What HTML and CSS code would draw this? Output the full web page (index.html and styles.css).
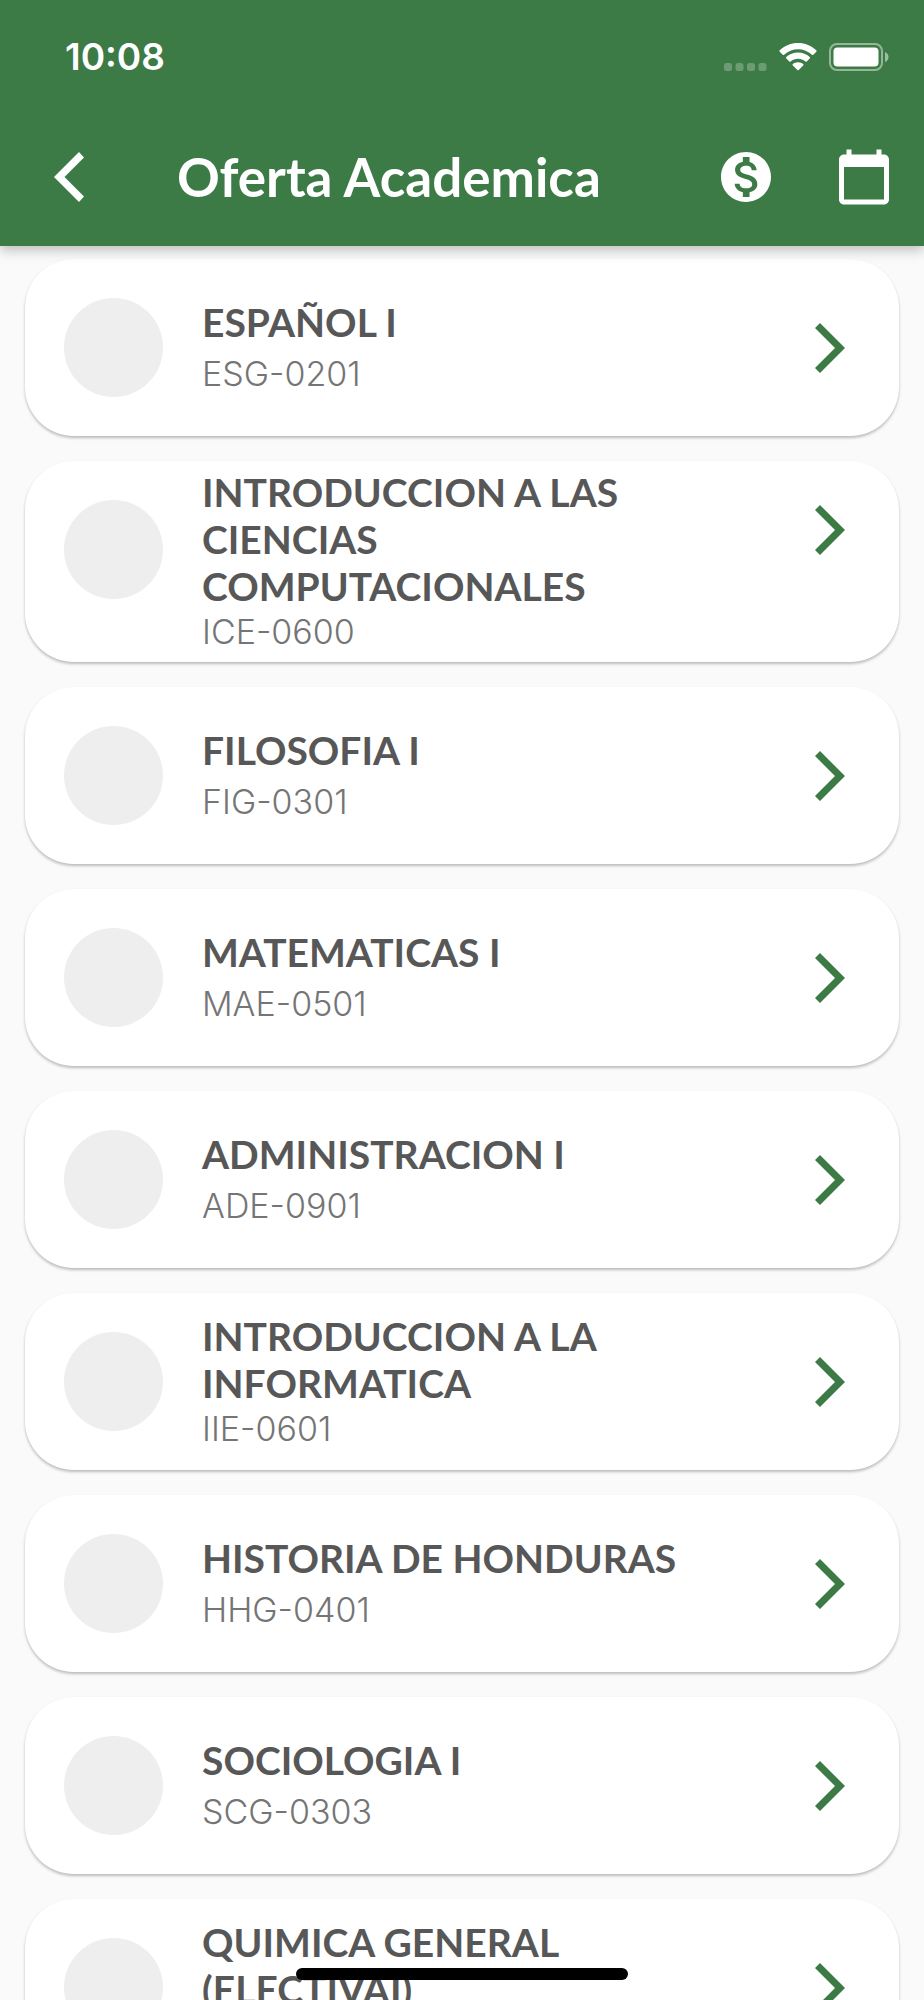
FILE: index.html
```html
<!DOCTYPE html>
<html lang="es">
<head>
    <meta charset="UTF-8">
    <meta name="viewport" content="width=device-width, initial-scale=1.0">
    <title>Oferta Academica</title>
    <link rel="stylesheet" href="styles.css">
</head>
<body>
    <svg width="0" height="0" class="sprite" aria-hidden="true">
        <symbol id="chevron" viewBox="0 0 30 50">
            <path d="M5 0L30 25 5 50 0 45 20 25 0 5z"/>
        </symbol>
    </svg>
    <div class="app">
        <header class="header">
            <div class="status-bar">
                <span class="time">10:08</span>
                <div class="status-icons">
                    <svg class="signal" viewBox="0 0 43 28" aria-hidden="true">
                        <rect x="0" y="20" width="8" height="8" rx="2.5"/>
                        <rect x="11.5" y="20" width="8" height="8" rx="2.5"/>
                        <rect x="23" y="20" width="8" height="8" rx="2.5"/>
                        <rect x="34.5" y="20" width="8" height="8" rx="2.5"/>
                    </svg>
                    <svg class="wifi" viewBox="0 0 38 28" aria-hidden="true">
                        <path d="M19 0C26 0 32.600 2.700 37.300 7.300Q38 8 37.300 8.800L34.300 11.800Q33.600 12.300 32.900 11.700C29.200 8.200 24.300 6.200 19 6.200S8.800 8.200 5.100 11.700Q4.400 12.300 3.700 11.800L.7 8.800Q0 8 .7 7.300C5.400 2.700 12 0 19 0z"/>
                        <path d="M19 9.600C23.500 9.600 27.600 11.300 30.700 14.100Q31.400 14.800 30.700 15.500L27.700 18.400Q27 19 26.300 18.400C24.300 16.700 21.800 15.800 19 15.800S13.700 16.700 11.700 18.400Q11 19 10.300 18.400L7.300 15.500Q6.600 14.800 7.300 14.100C10.400 11.300 14.500 9.600 19 9.600z"/>
                        <path d="M19 19.200C21 19.200 22.800 19.900 24.200 21Q24.900 21.700 24.200 22.400L19.700 27Q19 27.600 18.300 27L13.800 22.400Q13.100 21.700 13.800 21C15.200 19.900 17 19.200 19 19.200z"/>
                    </svg>
                    <svg class="battery" viewBox="0 0 60 28" aria-hidden="true">
                        <rect x="1" y="1" width="52" height="26" rx="7" fill="none" stroke="#fff" stroke-width="2" opacity=".45"/>
                        <rect x="4.500" y="4.500" width="45" height="19" rx="4"/>
                        <path d="M56 9Q59.500 10.500 59.500 14T56 19z" opacity=".5"/>
                    </svg>
                </div>
            </div>
            <div class="app-bar">
                <button type="button" class="icon-button back" aria-label="Regresar">
                    <svg class="back-icon" viewBox="0 0 30 50"><path d="M25 0L0 25 25 50 30 44.500 10.500 25 30 5.500z"/></svg>
                </button>
                <h1>Oferta Academica</h1>
                <button type="button" class="icon-button" aria-label="Pagos">
                    <svg class="action-icon" viewBox="0 0 24 24"><path d="M12 2C6.480 2 2 6.480 2 12s4.480 10 10 10 10-4.480 10-10S17.520 2 12 2zm1.410 16.090V20h-2.670v-1.930c-1.710-.36-3.160-1.460-3.270-3.400h1.960c.1 1.050.82 1.870 2.650 1.870 1.960 0 2.400-.98 2.400-1.590 0-.83-.44-1.610-2.670-2.140-2.480-.6-4.180-1.620-4.180-3.670 0-1.720 1.390-2.840 3.110-3.210V4h2.670v1.950c1.860.45 2.790 1.860 2.850 3.390H14.300c-.05-1.110-.64-1.870-2.220-1.870-1.500 0-2.400.68-2.400 1.640 0 .84.65 1.390 2.670 1.910s4.180 1.390 4.180 3.910c-.01 1.830-1.380 2.830-3.120 3.160z"/></svg>
                </button>
                <button type="button" class="icon-button" aria-label="Calendario">
                    <svg class="action-icon" viewBox="0 0 24 24"><path d="M20 3h-1V1h-2v2H7V1H5v2H4c-1.100 0-2 .9-2 2v16c0 1.100.9 2 2 2h16c1.100 0 2-.9 2-2V5c0-1.100-.9-2-2-2zm0 18H4V8h16v13z"/></svg>
                </button>
            </div>
        </header>
        <main class="content">
            <ul class="course-list">
                <li>
                    <a href="#" class="course">
                        <span class="avatar"></span>
                        <span class="course-text single">
                            <span class="course-name">ESPAÑOL I</span>
                            <span class="course-code">ESG-0201</span>
                        </span>
                        <svg class="arrow"><use href="#chevron"/></svg>
                    </a>
                </li>
                <li>
                    <a href="#" class="course tall">
                        <span class="avatar"></span>
                        <span class="course-text">
                            <span class="course-name">INTRODUCCION A LAS CIENCIAS COMPUTACIONALES</span>
                            <span class="course-code">ICE-0600</span>
                        </span>
                        <svg class="arrow"><use href="#chevron"/></svg>
                    </a>
                </li>
                <li>
                    <a href="#" class="course">
                        <span class="avatar"></span>
                        <span class="course-text single">
                            <span class="course-name">FILOSOFIA I</span>
                            <span class="course-code">FIG-0301</span>
                        </span>
                        <svg class="arrow"><use href="#chevron"/></svg>
                    </a>
                </li>
                <li>
                    <a href="#" class="course">
                        <span class="avatar"></span>
                        <span class="course-text single">
                            <span class="course-name">MATEMATICAS I</span>
                            <span class="course-code">MAE-0501</span>
                        </span>
                        <svg class="arrow"><use href="#chevron"/></svg>
                    </a>
                </li>
                <li>
                    <a href="#" class="course">
                        <span class="avatar"></span>
                        <span class="course-text single">
                            <span class="course-name">ADMINISTRACION I</span>
                            <span class="course-code">ADE-0901</span>
                        </span>
                        <svg class="arrow"><use href="#chevron"/></svg>
                    </a>
                </li>
                <li>
                    <a href="#" class="course">
                        <span class="avatar"></span>
                        <span class="course-text">
                            <span class="course-name">INTRODUCCION A LA INFORMATICA</span>
                            <span class="course-code">IIE-0601</span>
                        </span>
                        <svg class="arrow"><use href="#chevron"/></svg>
                    </a>
                </li>
                <li>
                    <a href="#" class="course">
                        <span class="avatar"></span>
                        <span class="course-text single">
                            <span class="course-name">HISTORIA DE HONDURAS</span>
                            <span class="course-code">HHG-0401</span>
                        </span>
                        <svg class="arrow"><use href="#chevron"/></svg>
                    </a>
                </li>
                <li>
                    <a href="#" class="course">
                        <span class="avatar"></span>
                        <span class="course-text single">
                            <span class="course-name">SOCIOLOGIA I</span>
                            <span class="course-code">SCG-0303</span>
                        </span>
                        <svg class="arrow"><use href="#chevron"/></svg>
                    </a>
                </li>
                <li>
                    <a href="#" class="course">
                        <span class="avatar"></span>
                        <span class="course-text">
                            <span class="course-name">QUIMICA GENERAL (ELECTIVAI)</span>
                            <span class="course-code"></span>
                        </span>
                        <svg class="arrow"><use href="#chevron"/></svg>
                    </a>
                </li>
            </ul>
        </main>
        <div class="home-indicator"></div>
    </div>
</body>
</html>
```
FILE: styles.css
```css
* {
    box-sizing: border-box;
}

body {
    margin: 0;
    background-color: #fafafa;
    font-family: Lato, sans-serif;
    color: #575757;
}

.sprite {
    position: absolute;
}

.app {
    display: flex;
    flex-direction: column;
    height: 100vh;
    overflow: hidden;
}

/* Header */
.header {
    flex-shrink: 0;
    background-color: #3c7a46;
    color: white;
    box-shadow: 0 4px 12px rgba(0, 0, 0, 0.25);
    z-index: 1;
}

.header svg {
    display: block;
    fill: white;
}

.status-bar {
    display: flex;
    justify-content: space-between;
    align-items: center;
    height: 108px;
    padding: 5px 35px 0 65px;
}

.time {
    font-family: Inter, sans-serif;
    font-size: 37px;
    font-weight: 600;
}

.status-icons {
    display: flex;
    gap: 12px;
}

.signal {
    width: 43px;
    height: 28px;
    opacity: 0.25;
}

.wifi {
    width: 38px;
    height: 28px;
}

.battery {
    width: 60px;
    height: 28px;
}

.app-bar {
    display: flex;
    align-items: center;
    height: 138px;
    padding: 0 30px 0 39px;
}

.app-bar h1 {
    flex: 1;
    margin: 0 0 0 93px;
    font-size: 53px;
    line-height: 60px;
    font-weight: bold;
}

.icon-button {
    padding: 0;
    border: none;
    background: none;
    cursor: pointer;
}

.icon-button + .icon-button {
    margin-left: 58px;
}

.back {
    padding: 0 0 0 15px;
}

.back-icon {
    width: 30px;
    height: 50px;
}

.action-icon {
    width: 60px;
    height: 60px;
}

/* Course list */
.content {
    flex: 1;
    min-height: 0;
    overflow-y: auto;
    scrollbar-width: none;
}

.course-list {
    display: flex;
    flex-direction: column;
    gap: 25px;
    list-style-type: none;
    margin: 0;
    padding: 13px 25px;
}

.course {
    display: flex;
    align-items: center;
    min-height: 177px;
    padding: 8px 32px 8px 39px;
    border-radius: 49px;
    background-color: white;
    box-shadow: 0 2px 3px rgba(0, 0, 0, 0.25);
    color: inherit;
    text-decoration: none;
}

.avatar {
    flex-shrink: 0;
    align-self: flex-start;
    width: 99px;
    height: 99px;
    margin-top: 31px;
    border-radius: 50%;
    background-color: #eeeeee;
}

.course-text {
    display: flex;
    flex-direction: column;
    flex: 1;
    margin: 0 40px 0 39px;
}

.single {
    gap: 6px;
}

.course-name {
    font-size: 39px;
    line-height: 47px;
    font-weight: bold;
}

.course-code {
    min-height: 44px;
    font-family: Inter, sans-serif;
    font-size: 34px;
    line-height: 44px;
    font-weight: 300;
    color: #757575;
}

.arrow {
    width: 74px;
    height: 50px;
    fill: #3c7a46;
}

.tall .arrow {
    align-self: flex-start;
    margin-top: 36px;
}

.home-indicator {
    position: fixed;
    bottom: 20px;
    left: 32%;
    width: 36%;
    height: 12px;
    border-radius: 6px;
    background-color: black;
}
```
